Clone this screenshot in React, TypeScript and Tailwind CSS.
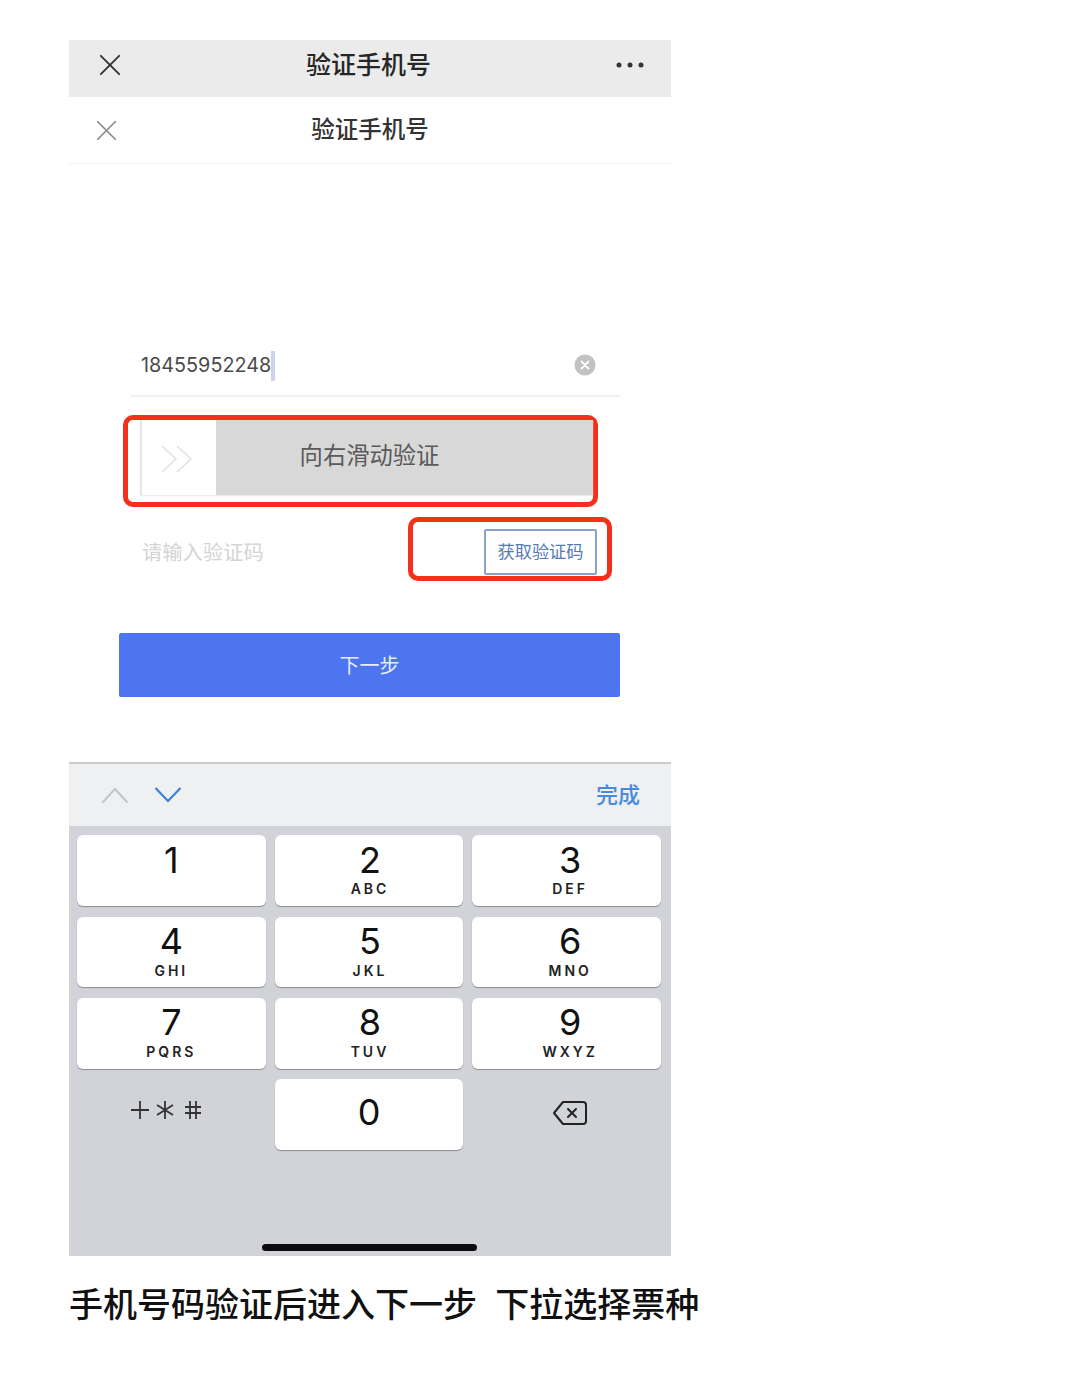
const cjk = "font-['Inter','Noto_Sans_CJK_SC',sans-serif]";

function CloseIcon({ size, color, width }: { size: number; color: string; width: number }) {
  return (
    <svg width={size} height={size} viewBox="0 0 24 24" fill="none" stroke={color} strokeWidth={width} strokeLinecap="round">
      <path d="M2 2 L22 22 M22 2 L2 22" />
    </svg>
  );
}

const rows: [string, string][][] = [
  [["1", ""], ["2", "ABC"], ["3", "DEF"]],
  [["4", "GHI"], ["5", "JKL"], ["6", "MNO"]],
  [["7", "PQRS"], ["8", "TUV"], ["9", "WXYZ"]],
];

const columnPad = ["pl-[0px]", "pl-[2px]", "pl-[7px]"];

function Key({ n, l, col }: { n: string; l: string; col: number }) {
  return (
    <div className={`flex h-[70.7px] flex-col items-center rounded-[6px] bg-white shadow-[0_1px_1px_#8b8c90] ${columnPad[col]}`}>
      <span className="mt-[4.5px] h-[40px] text-[36px] leading-[40px] text-[#111]">{n}</span>
      <span className="mt-[1.5px] text-[14px] font-semibold leading-[16px] tracking-[3px] text-[#222]">{l}</span>
    </div>
  );
}

export default function App() {
  return (
    <div className={`${cjk} min-h-[1375px] w-[1080px] bg-white pl-[69px] pt-[40px]`}>
      <div className="w-[602px]">
        <div className="flex h-[57px] items-center justify-between bg-[#ebebeb] pb-[6px] pl-[30px] pr-[27px]">
          <div className="mb-[2px]">
            <CloseIcon size={22} color="#333" width={2} />
          </div>
          <span className="text-[25px] font-medium leading-none text-[#262626]">验证手机号</span>
          <svg className="mb-[2px]" width="28" height="6" viewBox="0 0 28 6" fill="#333">
            <circle cx="3" cy="3" r="2.5" />
            <circle cx="14" cy="3" r="2.5" />
            <circle cx="25" cy="3" r="2.5" />
          </svg>
        </div>
        <div className="relative flex h-[67px] items-center justify-center border-b border-[#f3f3f3]">
          <div className="absolute left-[27px] top-[23px]">
            <CloseIcon size={21} color="#8a8a8a" width={2} />
          </div>
          <span className="text-[23.5px] font-medium leading-none text-[#333]">验证手机号</span>
        </div>

        <div className="ml-[62px] mt-[172px] flex h-[61px] w-[489px] items-center justify-between border-b-2 border-[#f1f1f1] pl-[10px] pr-[24px]">
          <div className="flex items-center">
            <span className="text-[19.8px] leading-none text-[#4a4a4a]">18455952248</span>
            <span className="h-[30px] w-[4px] bg-[#ccd2ef]"></span>
          </div>
          <svg className="mb-[1px]" width="22" height="22" viewBox="0 0 22 22">
            <circle cx="11" cy="11" r="10.5" fill="#c2c2c2" />
            <path d="M7.5 7.5 L14.5 14.5 M14.5 7.5 L7.5 14.5" stroke="#fff" strokeWidth="1.8" strokeLinecap="round" />
          </svg>
        </div>

        <div className="ml-[54px] mt-[18px] h-[92px] w-[475px] rounded-[10px] border-[5px] border-[#f5301a] pl-[12px] pt-[0px]">
          <div className="flex h-[75px] bg-[#d8d8d8] shadow-[0_1px_1px_#ececec]">
            <div className="flex w-[76px] items-center justify-center border-l-2 border-[#e6e6e6] bg-white pr-[5px] pt-[3px]">
              <svg width="34" height="30" viewBox="0 0 34 30" fill="none" stroke="#e2e2e2" strokeWidth="1.6">
                <path d="M2 2 L16 15 L2 28 M17 2 L31 15 L17 28" />
              </svg>
            </div>
            <div className="flex flex-1 items-center justify-center pb-[3px] pr-[70px] text-[23.3px] leading-none text-[#5a5a5a]">
              向右滑动验证
            </div>
          </div>
        </div>

        <div className="mt-[10px] flex h-[64px] w-[543px] items-center justify-between pl-[73px]">
          <span className="pt-[8px] text-[20.3px] leading-none text-[#d4d4d4]">请输入验证码</span>
          <div className="flex h-[64px] w-[204px] items-center justify-end rounded-[10px] border-[5px] border-[#f5301a] pr-[10px] pt-[6px]">
            <div className="flex h-[46px] w-[113px] items-center justify-center rounded-[2px] border-2 border-[#8aa2c8] text-[17.2px] leading-none text-[#5679b8]">
              获取验证码
            </div>
          </div>
        </div>

        <div className="ml-[50px] mt-[52px] flex h-[64px] w-[501px] items-center justify-center rounded-[2px] bg-[#4c75ef] pt-[2px] text-[20px] leading-none text-[#e6ecfb]">
          下一步
        </div>

        <div className="mt-[65px] flex h-[494px] flex-col bg-[#d1d3d8]">
          <div className="flex h-[64px] items-center justify-between border-t-2 border-[#cbcbcb] bg-[#eef0f2] pl-[32px] pr-[31px]">
            <div className="flex items-center gap-[25px]">
              <svg width="28" height="18" viewBox="0 0 28 18" fill="none" stroke="#c4c4c4" strokeWidth="2">
                <path d="M1.5 16.5 L14 3 L26.5 16.5" />
              </svg>
              <svg width="28" height="18" viewBox="0 0 28 18" fill="none" stroke="#3f7fdc" strokeWidth="2.2">
                <path d="M1.5 2 L14 15 L26.5 2" />
              </svg>
            </div>
            <span className="text-[22px] font-medium leading-none text-[#4a8ade]">完成</span>
          </div>

          <div className="flex flex-col gap-[10.6px] pl-[8px] pr-[10px] pt-[9.3px]">
            {rows.map((row, i) => (
              <div key={i} className="grid grid-cols-3 gap-[9px]">
                {row.map(([n, l], c) => (
                  <Key key={n} n={n} l={l} col={c} />
                ))}
              </div>
            ))}
            <div className="grid grid-cols-3 gap-[9px]">
              <div className="flex h-[70.7px] items-start justify-center pr-[11px] pt-[20px]">
                <svg width="74" height="22" viewBox="0 0 74 22" fill="none" stroke="#333" strokeWidth="1.8">
                  <path d="M2 11 H20 M11 2 V20" />
                  <path d="M36 2 V20 M28 6 L44 16 M44 6 L28 16" />
                  <path d="M56 8 H72 M56 14 H72 M61 2 V20 M67 2 V20" />
                </svg>
              </div>
              <div className="flex h-[70.7px] items-center justify-center rounded-[6px] bg-white pb-[4px] text-[36px] leading-none text-[#111] shadow-[0_1px_1px_#8b8c90]">
                0
              </div>
              <div className="flex h-[70.7px] items-start justify-center pl-[6px] pt-[21px]">
                <svg width="36" height="26" viewBox="0 0 36 26" fill="none" stroke="#222" strokeWidth="2" strokeLinejoin="round">
                  <path d="M11 2 H31 Q34 2 34 5 V21 Q34 24 31 24 H11 L2 13 Z" />
                  <path d="M16 9 L24 17 M24 9 L16 17" strokeLinecap="round" />
                </svg>
              </div>
            </div>
          </div>

          <div className="mt-auto flex justify-center pb-[5px] pr-[2px]">
            <div className="h-[7px] w-[215px] rounded-full bg-[#0b0b10]"></div>
          </div>
        </div>
      </div>

      <p className="mt-[25px] whitespace-pre text-[34px] font-medium leading-[48px] text-[#111]">手机号码验证后进入下一步  下拉选择票种</p>
    </div>
  );
}
